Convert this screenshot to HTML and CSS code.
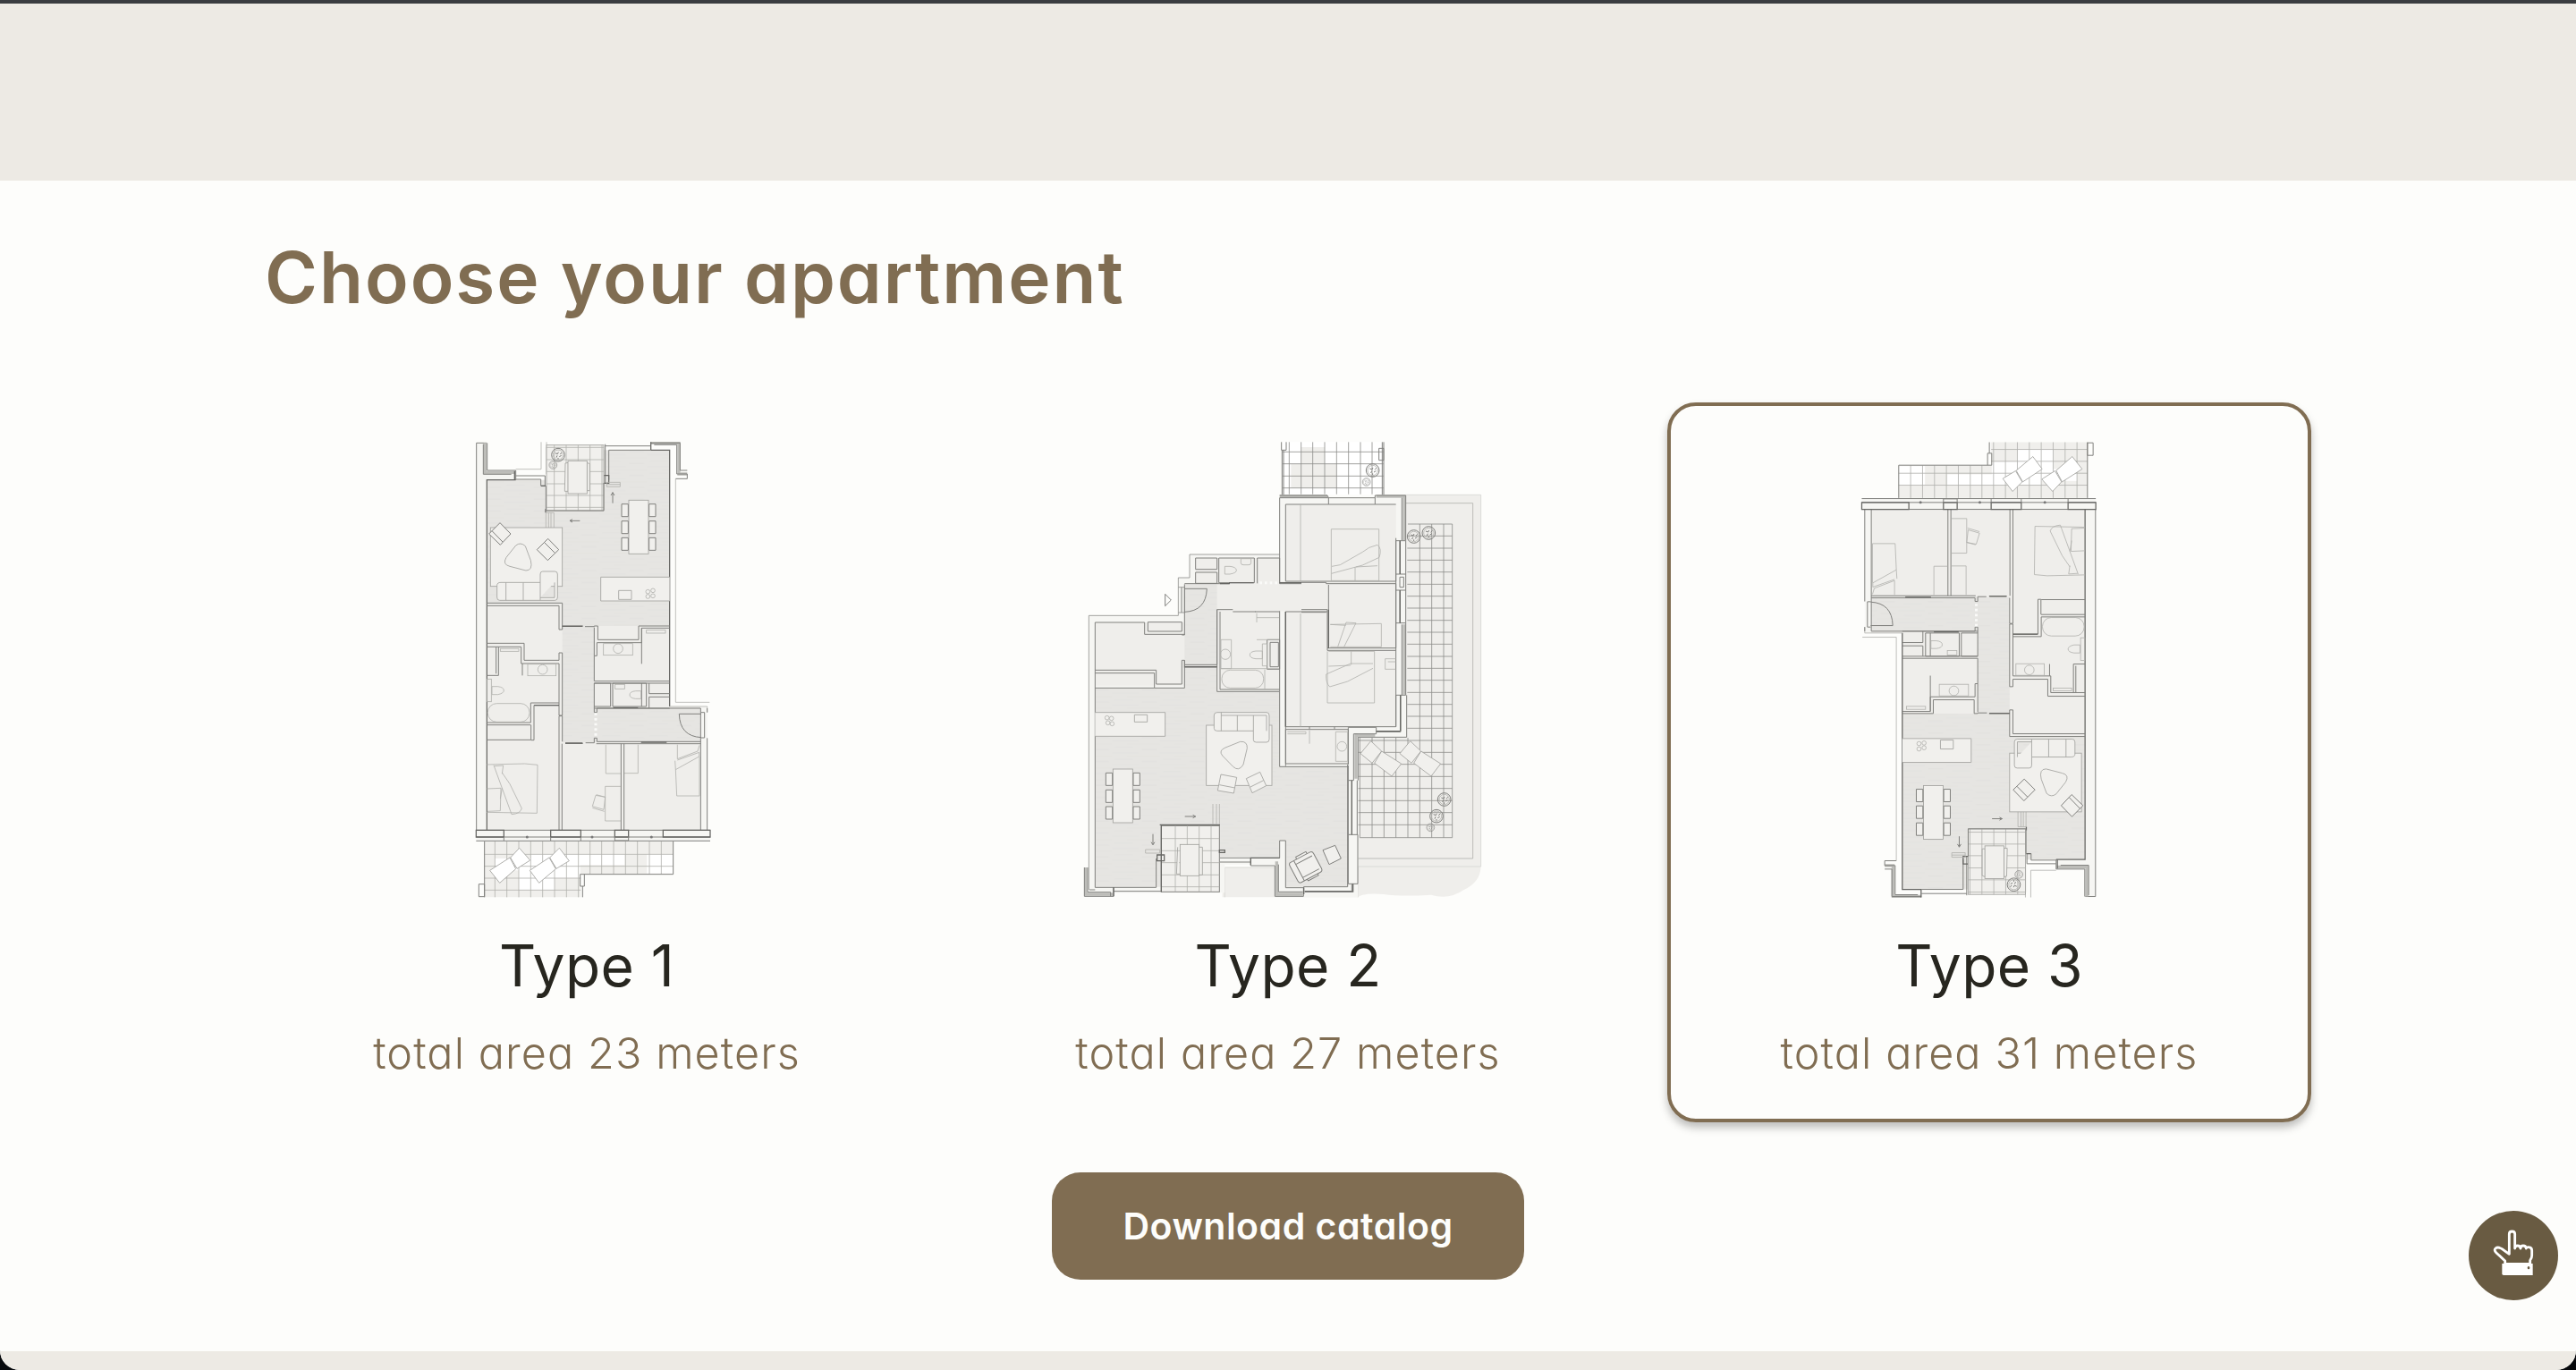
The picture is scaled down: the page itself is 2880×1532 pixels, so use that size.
FILE: index.html
```html
<!DOCTYPE html>
<html lang="en">
<head>
<meta charset="utf-8">
<title>Choose your apartment</title>
<link rel="stylesheet" href="styles.css">
</head>
<body>
<svg class="defs" aria-hidden="true">
  <defs>
    <pattern id="grain" width="160" height="40" patternUnits="userSpaceOnUse">
      <rect width="160" height="40" fill="#e6e5e2"/>
      <path d="M0 6H90M50 17H160M10 28H70M100 35H150" stroke="#e1e0dd" stroke-width="2"/>
    </pattern>
    <g id="plant"><circle r="22" class="md none"/><circle r="17" class="th none"/><path d="M-10-6l8 3l3-6M4 6l7-4M-6 9l3-7M12-8l-5 6M0 15v-5" class="md none"/></g>
    <g id="dining">
      <rect x="-33" y="-90" width="66" height="180" class="lt"/>
      <path d="M-35-77h-22v42h22zM-35-20h-22v42h22zM-35 36h-22v42h22zM35-77h22v42h-22zM35-20h22v42h-22zM35 36h22v42h-22z" class="md pale"/>
    </g>
    <g id="flat">
      <!-- floors -->
      <path d="M68 45H102V150H195V170H298V60H495V70H716V930H842V1345H68z" fill="#f6f6f3"/>
      <path d="M103 585H716V930H820V1345H103z" fill="#efeeeb"/>
      <path d="M103 170H300V273H495V70H716V660H463V936H820V1050H356V585H103z" fill="url(#grain)"/>
      <!-- outer walls -->
      <path d="M68 1345V46H102" class="md none"/>
      <path d="M97 46V145H197" class="band"/>
      <path d="M91 50V151H185M104 46V138H200V170" class="md none"/>
      <path d="M103 1345V170H200" class="dk none"/>
      <path d="M200 156H298V190M200 168H284V190H300" class="md none"/>
      <path d="M200 134H285V43M303 43V150" class="th none"/>
      <path d="M285 190H300M196 140V170" class="dk none"/>
      <path d="M652 46H747V150H775" class="band"/>
      <path d="M652 70H716V930" class="dk none"/>
      <path d="M652 46H751V138H775M664 52H740V150H775V166H736" class="md none"/>
      <path d="M653 43V70" class="dk none"/>
      <path d="M736 166V916H850M716 930H842V950" class="th none"/>
      <path d="M500 56H652M512 170V70H652M500 50V180" class="md none"/>
      <path d="M494 155H512V181H494zM300 268V280" class="dk none"/>
      <!-- loggia -->
      <rect x="303" y="53" width="192" height="220" class="lt"/>
      <path d="M329 53V273M369 53V273M409 53V273M449 53V273M489 53V273M303 61H495M303 102H495M303 142H495M303 183H495M303 222H495M303 262H495" class="th none"/>
      <path d="M301 190V273H495V180" class="md none"/>
      <path d="M366 114L376 112V208H364zM438 112L448 116V206H438z" class="lt"/>
      <rect x="375" y="106" width="64" height="110" class="lt"/>
      <use href="#plant" x="342" y="86"/>
      <g transform="translate(325 120) scale(.6)"><use href="#plant"/></g>
      <path d="M301 280H328V348H301zM310 280V348M318 280V348M505 178H550V193H505zM505 185H550" class="th none"/>
      <path d="M415 307H381M390 302L381 307L390 312M525 248V212M519 222L525 212L531 222" class="md none"/>
      <!-- living -->
      <rect x="115" y="330" width="241" height="197" class="lt"/>
      <path d="M150 514H282V486Q282 477 290 477H331Q340 477 340 486V564Q340 574 331 574H146Q137 574 137 564V524Q137 514 150 514zM167 514V574M225 514V574M282 514V574M282 565H330V514" class="lt"/>
      <path d="M200 390Q216 377 232 392L250 440Q258 474 234 474L180 460Q154 454 168 430z" class="lt"/>
      <path d="M147 314L183 351L148 388L110 351zM120 341L156 378M308 367L344 404L307 440L271 404zM296 380L332 416" class="lt md"/>
      <use href="#dining" x="612" y="328"/>
      <path d="M716 496H485V576H716" class="lt"/>
      <path d="M545 541H588V571H545z" class="lt"/>
      <g class="th none"><circle cx="643" cy="545" r="7"/><circle cx="660" cy="541" r="7"/><circle cx="643" cy="561" r="7"/><circle cx="660" cy="559" r="7"/></g>
      <!-- partitions -->
      <path d="M475 660H612V706H475z" fill="#efeeeb"/>
      <path d="M103 583H356V672H345V592H103M103 718H228V775H345V750H356V960H345V786H218V730H103M134 730V820M142 730V826H103" class="md none"/>
      <path d="M356 660H425M432 662H463V660H475V706H612V660H716M463 665V760H472V716H622V667H716M622 667V787M463 760V845H716M463 852H716" class="md none"/>
      <path d="M222 786V826M103 984H250V918H345M103 992H250M261 926H345M261 926V1043H251V992M103 1042H250" class="md none"/>
      <path d="M345 962H356V1048M345 962V1345M355 1055V1345M553 1055V1345M563 1055V1345M366 1054H425M434 1052H463V1036H472V1048H820M470 1055H820M463 852V950H472V936H820V1345" class="md none"/>
      <path d="M463 852H518V930H463M525 852H638V930H525zM622 852V930M647 852V887H716M716 898H647V936M463 936H716" class="md none"/>
      <path d="M366 1053H424M356 661H424M620 1050H706M527 934H610M262 926H345" class="dk none"/>
      <path d="M468 952V1036" class="dash"/>
      <path d="M842 1036V1345M822 950H833V1035H822M842 936V950" class="md none"/>
      <path d="M822 955H748Q750 1030 822 1034" class="md none"/>
      <!-- fittings -->
      <g class="th none">
        <rect x="148" y="736" width="62" height="9"/><rect x="638" y="674" width="64" height="10"/>
        <rect x="240" y="788" width="95" height="39"/><circle cx="290" cy="806" r="16"/>
        <rect x="494" y="719" width="98" height="39"/><circle cx="543" cy="736" r="16"/>
        <rect x="104" y="838" width="14" height="76"/><path d="M120 863H140Q160 866 160 876T140 890H120z"/>
        <rect x="106" y="920" width="140" height="62" rx="30"/>
        <rect x="533" y="856" width="32" height="15"/><path d="M620 878H602Q582 880 582 891T602 904H620z"/>
        <path d="M103 1125L230 1122L273 1126L271 1288L103 1285M103 1206L150 1204L148 1280L105 1282M126 1127L186 1292Q215 1290 220 1272L180 1190L154 1152M128 1130L158 1128L154 1156M148 1240L154 1204"/>
        <path d="M502 1058V1155H552M564 1154H610V1058M552 1198H500V1314H552"/>
        <path d="M470 1226L500 1234M457 1270L497 1282M500 1234L495 1276L457 1265L468 1228z"/>
        <path d="M742 1058V1106L810 1080L816 1060M734 1112L736 1142L815 1098V1084L742 1110M736 1142L740 1230H816V1098"/>
      </g>
      <!-- window band -->
      <path d="M67 1345H852V1380H67z" fill="#f6f6f3"/>
      <path d="M67 1345H852M67 1381H852M67 1368H852" class="md none"/>
      <path d="M67 1345H160V1368H67zM317 1345H418V1368H317zM532 1345H578V1368H532zM694 1345H852V1368H694z" class="dk none"/>
      <path d="M160 1368V1380M317 1368V1380M418 1368V1380M532 1368H578V1380H532z" class="md none"/>
      <g fill="#777"><circle cx="238" cy="1368" r="4.500"/><circle cx="456" cy="1368" r="4.500"/><circle cx="655" cy="1368" r="4.500"/></g>
      <!-- terrace -->
      <path d="M95 1383H728V1492H418V1570H95z" fill="#f0efec"/>
      <path d="M250 1426H416V1505H330V1545H210V1480H130V1440H250zM416 1426H565V1462H416zM640 1426H728V1490H640z" fill="#fff"/>
      <path d="M130 1383V1570M170 1383V1570M210 1383V1570M250 1383V1570M290 1383V1570M330 1383V1570M370 1383V1570M410 1383V1570M449 1383V1492M488 1383V1492M528 1383V1492M568 1383V1492M608 1383V1492M648 1383V1492M688 1383V1492M95 1426H728M95 1466H728M95 1506H418M95 1546H418" class="th none"/>
      <path d="M95 1383V1570M76 1526H95V1568H76zM728 1383V1493H416V1533H430V1493M424 1533V1570" class="md none"/>
      <path d="M113 1480L180 1437L200 1475L146 1522zM182 1437L212 1405L248 1446L204 1474zM247 1480L312 1437L334 1475L278 1522zM314 1437L346 1405L379 1448L336 1474z" class="lounger"/>
    </g>
  </defs>
</svg>

<div class="page">
  <div class="strip"></div>
  <main class="section">
    <h1 class="title">Choose your apartment</h1>
    <div class="cards">
      <article class="card">
        <svg class="plan" viewBox="-582 42 2040 1530"><use href="#flat"/></svg>
        <h2 class="name">Type 1</h2>
        <p class="area">total area 23 meters</p>
      </article>
      <article class="card">
        <svg class="plan" viewBox="-270 42 2040 1530">
          <!-- garden and terraces -->
          <path d="M1145 220H1397V1467Q1395 1520 1340 1545Q1290 1580 1230 1562Q1130 1568 1070 1560Q1000 1555 985 1570H530V1470H985V1035H1145z" fill="#efeeeb"/>
          <path d="M1145 220H1397V1467H985M538 1570V1470H706M985 1467V1570" class="th none faint"/>
          <path d="M1145 248H1370V1440H985" class="th none"/>
          <path d="M1152 318H1301V1370H991V1035M1192 318V1370M1232 318V1370M1272 318V1370M1152 1035V1370M1112 1035V1370M1072 1035V1370M1032 1035V1370M1150 358H1301M1150 399H1301M1150 439H1301M1150 479H1301M1150 520H1301M1150 560H1301M1150 600H1301M1150 641H1301M1150 681H1301M1150 721H1301M1150 762H1301M1150 802H1301M1150 842H1301M1150 883H1301M1150 923H1301M1150 963H1301M1150 1003H1301M985 1044H1301M985 1084H1301M985 1124H1301M985 1165H1301M985 1205H1301M985 1246H1301M985 1286H1301M985 1327H1301" class="th none deep"/>
          <path d="M732 43H1070V218H732z" fill="#fff"/>
          <path d="M794 60H873V116H913V197H760V116H794z" fill="#efeeeb"/>
          <path d="M754 43V218M794 43V218M833 43V218M873 43V218M913 43V218M953 43V218M993 43V218M1032 43V218M732 76H1070M732 116H1070M732 157H1070M732 197H1070" class="th none deep"/>
          <path d="M728 43V70H744V43M730 70V220M735 70V220M1066 43V220M1071 43V220M1055 64H1071V104H1055z" class="md none"/>
          <use href="#plant" x="1034" y="138"/><g transform="translate(1013 177) scale(.6)"><use href="#plant"/></g>
          <use href="#plant" x="1172" y="360"/><use href="#plant" x="1222" y="348"/>
          <use href="#plant" x="1274" y="1242"/><use href="#plant" x="1248" y="1298"/><g transform="translate(1228 1336) scale(.6)"><use href="#plant"/></g>
          <path d="M1028 1046L1064 1080L1032 1120L993 1088zM1064 1080L1130 1122L1098 1164L1040 1120zM1160 1046L1196 1080L1164 1120L1125 1088zM1196 1080L1262 1122L1230 1164L1172 1120z" class="lt"/>
          <!-- shell and floors -->
          <path d="M722 230H1145V1035H985V1570H706V1460H538V1555H82V625H382V498H420V420H722z" fill="#f6f6f3"/>
          <path d="M742 252H1112V998H952V1122H742V610H722V880H403V860H103V648H403V520H440V432H722V510H742z" fill="#efeeeb"/>
          <path d="M403 520H512V880H722V1130H952V1535H742V1380H722V1435H522V1330H325V1535H103V868H403z" fill="url(#grain)"/>
          <path d="M524 522H886V610H524z" fill="#efeeeb"/>
          <!-- outer lines -->
          <path d="M382 625H82V1545M382 625V498H420V420H722M382 530H403V615H382" class="th none deep"/>
          <path d="M722 225H882M1046 225H1140V372M1140 655V890" class="band"/>
          <path d="M722 518V230H886V252H742V510H1112V365M722 222H882L886 230H1042V252H1112M1042 230V222H1145V374H1112M886 252H1042M1132 230V372" class="md none"/>
          <path d="M1112 374V486M1125 374V486M1145 374V486M1112 486H1145V540H1112zM1125 496H1138V530H1125zM1112 540V650M1125 540V650M1145 540V650M1112 650H1145V892M1112 650V998M1132 655V892M1112 892H1145M1128 892V1015H1046M1148 892V1033H985V1178M742 998H1112V892" class="md none"/>
          <path d="M1126 374V486M1126 540V650M1127 892V1012M1046 1013H1127" class="dk none"/>
          <path d="M978 1027H1042M978 1020V1172" class="band"/>
          <path d="M952 1125V1000H1046V1022H970V1178H952V1128M952 1178V1360M964 1178V1360M982 1178V1360M952 1360H984V1525H952zM964 1525V1550H806" class="md none"/>
          <path d="M964 1178V1360M806 1551H968V1525" class="dk none"/>
          <!-- left shell -->
          <path d="M72 1470V1560H162" class="band"/>
          <path d="M67 1470V1567H165V1537H103V648H269V688H403M78 1470V1553H155V1567M84 1545H103M165 1550H325M165 1537H308V1440" class="md none"/>
          <path d="M712 1450V1560H800" class="band"/>
          <path d="M522 1438H625V1464H706V1567H802V1538H742V1380H722V1438H625M718 1460V1552H800M522 1452H625M802 1535H950V1125" class="md none"/>
          <path d="M625 1436V1462M722 1438H625M803 1537V1560M165 1537V1567" class="dk none"/>
          <!-- rooms -->
          <path d="M280 647H394V678H280zM103 808H308V855H394V775H403V868H302V818H103M103 868H302M403 520V690H394M440 432H512V470H440zM440 480H512V517H440zM403 518H552M518 432H637V515H518zM647 517V432H722V517M722 518H795M795 514H878V518H1112V734H882V605H795M886 522V734M722 610V880H512V605H565M522 612V873H722M640 612H722M742 1130V612H882M742 612V998M882 734V742H1112" class="md none"/>
          <path d="M512 605V790M403 790H512M403 798H512M403 775V800M680 706H722V805H680zM690 715H718V797H690zM565 612H642M795 614H878M722 880V1132H952M742 1122V1007H952V1122H742M822 1007V998M906 1007V998" class="md none"/>
          <path d="M552 515H635M522 518H555M722 515H795M403 797H512M886 605V735M742 998V612" class="dk none"/>
          <path d="M655 515H715" class="dash"/>
          <path d="M403 535H478Q475 610 403 613M393 530V615" class="md none"/>
          <path d="M338 553V593L358 573z" class="md none"/>
          <!-- fittings -->
          <g class="th none">
            <path d="M792 252V510M792 618V998M645 617V648M645 632H720M645 706H720M560 706H525V803H560zM822 1010V1055M748 1015H810V1022H748M910 1015H950V1114H910z"/>
            <circle cx="540" cy="755" r="17"/><circle cx="931" cy="1064" r="16"/>
            <path d="M538 460H555Q575 462 577 472T555 486H538zM592 434H626V448Q626 455 618 455H600Q592 455 592 448zM664 744H642Q622 746 622 757T642 770H664zM664 720H680V794H664z"/>
            <rect x="528" y="808" width="140" height="60" rx="28"/><path d="M672 806V873M525 803H720"/>
            <path d="M895 335H1055V508H895zM896 484L1000 456L1056 430Q1066 400 1050 388Q1020 394 1000 412L925 455L897 460M975 462V508M978 462L1050 458"/>
            <path d="M892 655L1063 652V730H892M917 730L945 648L978 650L938 730M892 655L944 658"/>
            <path d="M886 745H1040V918H882V745M962 745V790M886 795L960 792M1035 786L960 786L878 822Q876 850 890 864L950 846L1035 802M1112 770H1076V805H1112M1085 780H1112"/>
          </g>
          <path d="M103 950H338V1030H103" class="lt"/><path d="M235 958H278V982H235z" class="lt"/>
          <g class="th none"><circle cx="143" cy="968" r="7"/><circle cx="158" cy="970" r="7"/><circle cx="146" cy="985" r="7"/><circle cx="160" cy="988" r="7"/></g>
          <rect x="476" y="993" width="220" height="202" class="lt"/>
          <path d="M512 950H678Q687 950 687 960V1040Q687 1050 678 1050H643Q634 1050 634 1042V1012H512Q502 1012 502 1003V960Q502 950 512 950zM526 950V1012M580 960V1012M634 960V1012M526 960H678V1012" class="lt"/>
          <path d="M540 1068L590 1048Q614 1046 613 1070L600 1125Q585 1150 566 1132L530 1095Q516 1078 540 1068z" class="lt"/>
          <path d="M525 1158L578 1168L568 1221L514 1212zM520 1193L572 1203M610 1172L656 1150L677 1196L630 1220zM624 1200L668 1178" class="lt"/>
          <use href="#dining" x="196" y="1230"/>
          <rect x="325" y="1330" width="195" height="222" class="lt md"/>
          <path d="M372 1330V1552M412 1330V1552M452 1330V1552M492 1330V1552M325 1373H520M325 1414H520M325 1454H520M325 1495H520M325 1535H520" class="th none"/>
          <path d="M380 1402L376 1492H388M452 1402H463V1495H452" class="lt"/>
          <rect x="388" y="1393" width="64" height="105" class="lt"/>
          <path d="M320 1327H522M325 1330V1552M311 1428H335V1448H311zM520 1412H538V1420H520z" class="dk none"/>
          <path d="M498 1257V1325M510 1257V1325M520 1257V1325M272 1410H320V1422H272z" class="th none"/>
          <path d="M404 1299H440M431 1294L440 1299L431 1304M297 1358V1394M291 1385L297 1394L303 1385" class="md none"/>
          <g transform="translate(812 1468) rotate(-28)"><path d="M-40-38H32Q42-38 42-28V28Q42 38 32 38H-40Q-48 38-48 28V-28Q-48-38-40-38zM-28-38V38M-28-24H34M-28 26H34M-18-38L-16-46H22V-38M-18 38L-16 44H22V38" class="lt md"/></g>
          <path d="M867 1412L908 1396L928 1440L888 1460z" class="lt md"/>
        </svg>
        <h2 class="name">Type 2</h2>
        <p class="area">total area 27 meters</p>
      </article>
      <article class="card selected">
        <svg class="plan" viewBox="-498 42 2040 1530"><use href="#flat" transform="rotate(180 473.2 806.8)"/></svg>
        <h2 class="name">Type 3</h2>
        <p class="area">total area 31 meters</p>
      </article>
    </div>
    <button class="download">Download catalog</button>
  </main>
  <footer class="footer"></footer>
</div>
<button class="fab" aria-label="Pointer">
  <svg viewBox="90 72 300 300">
    <path d="M226 217V150Q226 141 235.500 141T245 150V198Q245 189 254 189T264 198Q264 189 273 189T283 198Q284 193 292 194Q302 195 302 205V222Q302 231 296 238V250H212V240L182 212Q174 203 180 198Q188 191 202 200Q214 209 226 217z" fill="none" stroke="#fff" stroke-width="8.500" stroke-linejoin="round"/>
    <path d="M202 249H305V288H207Q202 288 202 283z" fill="#fff"/>
    <ellipse cx="291" cy="263" rx="4" ry="5" fill="#695b42"/>
  </svg>
</button>
</body>
</html>
```
FILE: styles.css
```css
* { box-sizing: border-box; }
body {
  margin: 0;
  height: 1532px;
  overflow: hidden;
  background: #07090c;
  font-family: Inter, "Liberation Sans", sans-serif;
  font-feature-settings: "cv11";
}
.defs { position: absolute; width: 0; height: 0; }
.page {
  height: 1532px;
  display: flex;
  flex-direction: column;
  overflow: hidden;
  border-radius: 0 0 22px 22px;
  background: #fdfdfb;
}
.strip { height: 202px; flex: none; background: #edeae4; border-top: 4px solid #3b3d41; }
.section {
  flex: 1;
  display: flex;
  flex-direction: column;
  padding: 48px 296px 0;
}
.title {
  margin: 0;
  height: 120px;
  line-height: 120px;
  font-size: 80px;
  font-weight: 560;
  letter-spacing: 2px;
  color: #806d52;
}
.cards { display: flex; gap: 64px; margin-top: 80px; }
.card {
  width: 720px;
  height: 805px;
  border: 4px solid transparent;
  border-radius: 32px;
  padding-top: 40px;
  text-align: center;
}
.selected {
  border-color: #806d52;
  box-shadow: 0 6px 10px rgba(0, 0, 0, .25);
}
.plan { display: block; width: 680px; height: 510px; margin: 0 auto; }
.name {
  margin: 28px 0 0;
  line-height: 96px;
  font-size: 64px;
  font-weight: 430;
  letter-spacing: .4px;
  color: #27261f;
}
.area {
  margin: 14px 0 0;
  line-height: 72px;
  font-size: 48.5px;
  font-weight: 320;
  letter-spacing: 1.1px;
  color: #806d52;
}
.download {
  align-self: center;
  width: 528px;
  height: 120px;
  margin-top: 56px;
  border: 0;
  border-radius: 32px;
  background: #806d52;
  color: #fdfdfb;
  font: 560 41px/60px Inter, "Liberation Sans", sans-serif;
  font-feature-settings: inherit;
  letter-spacing: .5px;
}
.footer { height: 21px; flex: none; background: #edeae4; }
.fab {
  position: absolute;
  right: 20px;
  top: 1354px;
  width: 100px;
  height: 100px;
  padding: 0;
  border: 0;
  border-radius: 50%;
  background: #695b42;
}
.fab svg { display: block; width: 100px; height: 100px; }

.th { stroke: #b0b0ac; stroke-width: 2.4; }
.faint { stroke: #d4d4d0; }
.deep { stroke: #8c8c89; }
.lt { fill: #f1f0ed; stroke: #a4a4a0; stroke-width: 2.6; }
.md { stroke: #80807d; stroke-width: 3; }
.dk { stroke: #666663; stroke-width: 3.8; }
.pale { fill: #f1f0ed; }
.none { fill: none; }
.lounger { fill: #fff; stroke: #a4a4a0; stroke-width: 2.6; }
.band { fill: none; stroke: #bdbdb9; stroke-width: 10; }
.dash { fill: none; stroke: #fafaf8; stroke-width: 9; stroke-dasharray: 8 9; }
```
